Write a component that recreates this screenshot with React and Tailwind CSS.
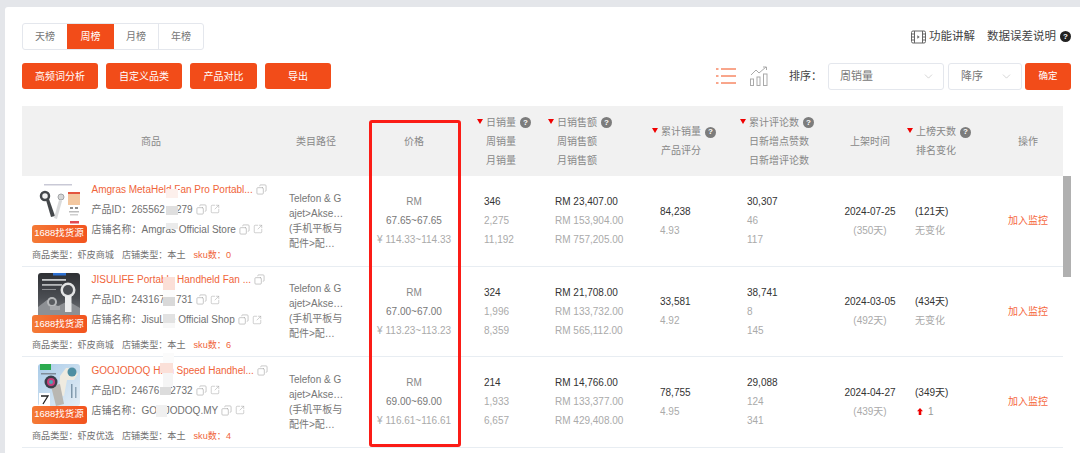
import React from "react";
import { ChevronDown, Copy, SquareArrowOutUpRight } from "lucide-react";

const F = "font-['Liberation_Sans','Noto_Sans_CJK_SC',sans-serif]";

function Tri() {
  return <span className="absolute left-[-9px] top-[6px] w-0 h-0 border-l-[3.5px] border-r-[3.5px] border-t-[5px] border-l-transparent border-r-transparent border-t-[#f00000]" />;
}
function Q({ className = "" }) {
  return <span className={`inline-flex items-center justify-center w-[11px] h-[11px] rounded-full bg-[#7c7c7c] text-white text-[8px] font-bold leading-none ${className}`}>?</span>;
}
function H({ lines }) {
  return (
    <div className="flex flex-col text-[10px] leading-[19px] text-[#888]">
      {lines.map((l, i) => (
        <div key={i} className="relative whitespace-nowrap">
          {i === 0 && <Tri />}
          {l}
          {i === 0 && <Q className="ml-[4px] align-[1px]" />}
        </div>
      ))}
    </div>
  );
}
function Ic({ ext }) {
  return (
    <span className="inline-flex items-center gap-[3px] ml-[3px] text-[#aaa] align-[-2px]">
      <Copy size={11} strokeWidth={1.4} className="-scale-x-100" />
      {ext && <SquareArrowOutUpRight size={10} strokeWidth={1.3} />}
    </span>
  );
}

function Img1() {
  return (
    <svg viewBox="0 0 42 42" className="w-[42px] h-[42px] blur-[0.5px]">
      <rect width="42" height="42" fill="#fff" />
      <rect x="6" y="1" width="28" height="1.5" fill="#c9c9d6" />
      <circle cx="7" cy="13" r="4" fill="#f2f2f2" stroke="#44474b" strokeWidth="2.5" />
      <path d="M8 17 L13 34 L17 33 L11 16Z" fill="#44474a" />
      <circle cx="23" cy="14" r="3" fill="#d4d5d6" stroke="#a2a4a6" strokeWidth="1" />
      <path d="M21 17 L16 35 L19 36 L24 18Z" fill="#d9dadb" />
      <rect x="30" y="9" width="12" height="13" fill="#f3c79f" />
      <rect x="30" y="9" width="12" height="2" fill="#e3553f" />
      <rect x="32" y="24" width="3" height="2" fill="#8b8b8b" />
      <rect x="37" y="24" width="3" height="2" fill="#8b8b8b" />
      <rect x="31" y="28" width="10" height="1.5" fill="#bdbdbd" />
      <rect x="32" y="31" width="8" height="1.5" fill="#cfcfcf" />
      <rect x="32" y="38" width="9" height="2.5" fill="#e24a52" />
    </svg>
  );
}
function Img2() {
  return (
    <svg viewBox="0 0 42 42" className="w-[42px] h-[42px] blur-[0.4px]">
      <defs>
        <linearGradient id="dg" x1="0" y1="0" x2="0" y2="1">
          <stop offset="0" stopColor="#2e3034" />
          <stop offset="0.6" stopColor="#4b4e53" />
          <stop offset="1" stopColor="#74777b" />
        </linearGradient>
      </defs>
      <rect width="42" height="42" rx="3" fill="url(#dg)" />
      <rect x="15" y="0" width="13" height="2.5" fill="#2c6fd0" />
      <rect x="4" y="6" width="24" height="1.8" fill="#c9cbcd" />
      <rect x="4" y="11" width="20" height="1.8" fill="#b5b7b9" />
      <rect x="4" y="16" width="14" height="1" fill="#8f9194" />
      <path d="M0 34 L9 27 L20 33 L30 28 L42 35 V42 H0Z" fill="#8d9094" />
      <circle cx="30" cy="17" r="7.5" fill="#e2e3e4" />
      <circle cx="30" cy="17" r="5" fill="#4a4d52" />
      <rect x="27" y="23" width="6.5" height="16" fill="#ecedee" />
      <circle cx="14" cy="29" r="5" fill="#b7b9bb" />
      <circle cx="14" cy="29" r="3" fill="#5a5d61" />
      <rect x="12" y="33" width="10" height="4" fill="#a6a8ab" />
    </svg>
  );
}
function Img3() {
  return (
    <svg viewBox="0 0 42 42" className="w-[42px] h-[42px] blur-[0.4px]">
      <defs>
        <linearGradient id="bg3" x1="0" y1="0" x2="1" y2="1">
          <stop offset="0" stopColor="#a9cbe8" />
          <stop offset="1" stopColor="#e6eff6" />
        </linearGradient>
      </defs>
      <rect width="42" height="42" rx="3" fill="url(#bg3)" />
      <rect x="2" y="0" width="11" height="6" fill="#2bab4e" />
      <rect x="3" y="9" width="15" height="1.5" fill="#7f8b98" />
      <path d="M22 12 L28 4 L36 4 L40 10 L36 16 L29 16 L26 32 L21 31Z" fill="#efebe0" />
      <circle cx="34" cy="8" r="4.5" fill="#4f8fa3" />
      <path d="M13 22 L22 20 L26 40 L18 42Z" fill="#b9b7b2" />
      <circle cx="13" cy="18" r="6.5" fill="#3b3f4a" />
      <circle cx="13" cy="18" r="4" fill="#c93f7c" />
      <circle cx="13" cy="18" r="2" fill="#4aa6b3" />
      <rect x="1" y="29" width="11" height="13" fill="#fff" />
      <path d="M3 32 H10 L5 40" fill="none" stroke="#222" strokeWidth="1.3" />
      <rect x="33" y="20" width="1.5" height="14" fill="#7e97aa" />
      <rect x="37" y="23" width="1.5" height="11" fill="#8ea6b8" />
    </svg>
  );
}

const rows = [
  {
    img: <Img1 />, title: "Amgras MetaHeld Fan Pro Portabl...", id: "265562", id2: "279", store: "Amgras Official Store",
    type: "虾皮商城", sku: 0, price: "67.65~67.65", cny: "114.33~114.33",
    d: ["346", "2,275", "11,192"], a: ["RM 23,407.00", "RM 153,904.00", "RM 757,205.00"],
    t: ["84,238", "4.93"], r: ["30,307", "46", "117"], date: "2024-07-25", dd: "(350天)", days: "(121天)", ch: "无变化",
    patches: [
      { x: "left-[144px] top-[13px] w-[12px] h-[9px] bg-[#fdf0ec]", k: 1 },
      { x: "left-[144px] top-[30px] w-[12px] h-[9px] bg-[#dfdfdf]", k: 2 },
      { x: "left-[144px] top-[47px] w-[12px] h-[6px] bg-[#ebebeb]", k: 3 },
    ],
  },
  {
    img: <Img2 />, title: "JISULIFE Portable Handheld Fan ...", id: "243167", id2: "731", store: "JisuLife Official Shop",
    type: "虾皮商城", sku: 6, price: "67.00~67.00", cny: "113.23~113.23",
    d: ["324", "1,996", "8,359"], a: ["RM 21,708.00", "RM 133,732.00", "RM 565,112.00"],
    t: ["33,581", "4.92"], r: ["38,741", "8", "145"], date: "2024-03-05", dd: "(492天)", days: "(434天)", ch: "无变化",
    patches: [
      { x: "left-[141px] top-[10px] w-[12px] h-[13px] bg-[#fbdfd7]", k: 1 },
      { x: "left-[141px] top-[23px] w-[12px] h-[7px] bg-[#fcfcfc]", k: 2 },
      { x: "left-[141px] top-[30px] w-[12px] h-[9px] bg-[#d9d9d9]", k: 3 },
      { x: "left-[141px] top-[47px] w-[12px] h-[9px] bg-[#e2e2e2]", k: 4 },
      { x: "left-[141px] top-[56px] w-[12px] h-[5px] bg-[#f8f8f8]", k: 5 },
    ],
  },
  {
    img: <Img3 />, title: "GOOJODOQ High Speed Handhel...", id: "24676", id2: "2732", store: "GOOJODOQ.MY",
    type: "虾皮优选", sku: 4, price: "69.00~69.00", cny: "116.61~116.61",
    d: ["214", "1,933", "6,657"], a: ["RM 14,766.00", "RM 133,377.00", "RM 429,408.00"],
    t: ["78,755", "4.95"], r: ["29,088", "124", "341"], date: "2024-04-27", dd: "(439天)", days: "(349天)", ch: "up",
    patches: [
      { x: "left-[141px] top-[-4px] w-[11px] h-[10px] bg-[#fbfbfb]", k: 0 },
      { x: "left-[138px] top-[6px] w-[13px] h-[10px] bg-[#fbe0d8]", k: 1 },
      { x: "left-[141px] top-[16px] w-[10px] h-[14px] bg-[#f5f5f5]", k: 2 },
      { x: "left-[138px] top-[30px] w-[11px] h-[8px] bg-[#dcdcdc]", k: 3 },
      { x: "left-[134px] top-[48px] w-[11px] h-[12px] bg-[#f0f0f0]", k: 4 },
    ],
  },
];

function Stack({ items }) {
  return (
    <div className="flex flex-col leading-[19px] text-[10px] text-[#aaa] whitespace-nowrap">
      {items.map((x, i) => (
        <div key={i} className={i === 0 ? "text-[#333]" : ""}>{x}</div>
      ))}
    </div>
  );
}

const cols = "grid grid-cols-[258px_88px_116px_71px_105px_87px_78px_90px_78px_70px]";
const btn = "h-[26px] flex items-center justify-center rounded-[3px] bg-[#f24c19]";

export default function App() {
  return (
    <div className={`${F} w-[1080px] h-[453px] overflow-hidden bg-[#e4e6ea] pl-[5px] pt-[7px]`}>
      <div className="relative bg-white h-[446px] rounded-tl-[3px] pl-[17px] pr-[9px] pt-[16px]">
        <div className="flex justify-between items-start h-[27px]">
          <div className="flex h-[27px] border border-[#e4e7ed] rounded-[3px] text-[10px] text-[#777]">
            <div className="w-[44px] flex items-center justify-center">天榜</div>
            <div className="w-[47px] flex items-center justify-center bg-[#f24c19] text-white">周榜</div>
            <div className="w-[45px] flex items-center justify-center border-r border-[#e4e7ed]">月榜</div>
            <div className="w-[44px] flex items-center justify-center">年榜</div>
          </div>
          <div className="flex items-center text-[11.5px] text-[#444] mt-[1px] h-[25px]">
            <svg viewBox="0 0 15 14" className="w-[15px] h-[14px] mr-[3px]" fill="none" stroke="#666" strokeWidth="1">
              <rect x="0.5" y="1" width="14" height="12" rx="1.5" />
              <path d="M3.5 1v12M11.5 1v12M0.5 4h3M0.5 7h3M0.5 10h3M11.5 4h3M11.5 7h3M11.5 10h3" />
              <path d="M6.3 5.2l2.4 1.8-2.4 1.8z" fill="#666" stroke="none" />
            </svg>
            <span>功能讲解</span>
            <span className="ml-[12px]">数据误差说明</span>
            <span className="ml-[4px] inline-flex items-center justify-center w-[11px] h-[11px] rounded-full bg-[#222] text-white text-[8px] font-bold leading-none">?</span>
          </div>
        </div>

        <div className="flex justify-between items-center mt-[12px] h-[28px]">
          <div className="flex gap-[8px] text-[10px] text-white">
            <div className={`${btn} w-[76px]`}>高频词分析</div>
            <div className={`${btn} w-[76px]`}>自定义品类</div>
            <div className={`${btn} w-[67px]`}>产品对比</div>
            <div className={`${btn} w-[66px]`}>导出</div>
          </div>
          <div className="flex items-center">
            <svg viewBox="0 0 20 16" className="w-[20px] h-[16px]" fill="none" stroke="#f24c19" strokeWidth="1">
              <path d="M5 1h15M5 8h15M5 15h15" />
              <path d="M0 1h2.5M0 8h2.5M0 15h2.5" />
            </svg>
            <svg viewBox="0 0 18 20" className="w-[18px] h-[20px] ml-[14px]" fill="none" stroke="#aaa" strokeWidth="1">
              <rect x="0.5" y="13" width="3" height="6.5" />
              <rect x="7" y="11" width="3" height="8.5" />
              <rect x="13.5" y="8" width="3.5" height="11.5" />
              <path d="M1 9l5-5 3 3 7-6M13 1h3.5v3" />
            </svg>
            <span className="ml-[21px] text-[11px] text-[#444] w-[39px]">排序：</span>
            <div className="w-[116px] h-[27px] border border-[#e4e7ed] rounded-[3px] flex items-center justify-between pl-[11px] pr-[8px] text-[11px] text-[#777]">
              周销量 <ChevronDown size={13} strokeWidth={0.9} color="#aaa" />
            </div>
            <div className="ml-[4px] w-[74px] h-[27px] border border-[#e4e7ed] rounded-[3px] flex items-center justify-between pl-[12px] pr-[8px] text-[11px] text-[#777]">
              降序 <ChevronDown size={13} strokeWidth={0.9} color="#aaa" />
            </div>
            <div className="ml-[3px] w-[46px] h-[27px] rounded-[3px] bg-[#f24c19] text-white text-[9.5px] flex items-center justify-center">确定</div>
          </div>
        </div>

        <div className="w-[1041px] mt-[16px]">
          <div className={`${cols} h-[70px] bg-[#f1f1f1] items-center text-[10px] text-[#888]`}>
            <div className="text-center">商品</div>
            <div className="pl-[16px]">类目路径</div>
            <div className="text-center pr-[24px]">价格</div>
            <div className="pl-[2px]"><H lines={["日销量", "周销量", "月销量"]} /></div>
            <div className="pl-[2px]"><H lines={["日销售额", "周销售额", "月销售额"]} /></div>
            <div className="pl-[1px]"><H lines={["累计销量", "产品评分"]} /></div>
            <div className="pl-[2px]"><H lines={["累计评论数", "日新增点赞数", "日新增评论数"]} /></div>
            <div className="text-center">上架时间</div>
            <div className="pl-[1px]"><H lines={["上榜天数", "排名变化"]} /></div>
            <div className="text-center">操作</div>
          </div>

          {rows.map((r) => (
            <div key={r.id} className={`${cols} h-[90.5px] border-b border-[#e8edf2] items-center text-[10px]`}>
              <div className="relative h-full pl-[9.5px]">
                <div className="flex">
                  <div className="w-[60px] pl-[6.5px] pt-[6.5px] shrink-0">
                    <div className="h-[42px]">{r.img}</div>
                    <div className="-ml-[6.5px] w-[55px] h-[18px] rounded-[3px] bg-gradient-to-r from-[#f47a35] via-[#f4622a] to-[#f2541e] text-white text-[9.5px] flex items-center justify-center whitespace-nowrap">1688找货源</div>
                  </div>
                  <div className="flex flex-col pt-[3.5px] text-[10px] leading-[20px] text-[#707070] whitespace-nowrap">
                    <div className="text-[#f0643a]">{r.title}<Ic /></div>
                    <div>产品ID：{r.id}<span className="inline-block w-[11px]" />{r.id2}<Ic ext /></div>
                    <div>店铺名称：{r.store}<Ic ext /></div>
                  </div>
                </div>
                <div className="absolute left-[10px] bottom-[4px] flex text-[9.1px] leading-[14px] text-[#707070] whitespace-nowrap">
                  <span>商品类型：{r.type}</span>
                  <span className="ml-[8px]">店铺类型：本土</span>
                  <span className="ml-[8px] text-[#f0643a]">sku数：{r.sku}</span>
                </div>
                {r.patches.map((p) => (
                  <span key={p.k} className={`absolute ${p.x}`} />
                ))}
              </div>
              <div className="pl-[9px] text-[10px] leading-[15px] text-[#777]">
                <div>Telefon &amp; G</div>
                <div>ajet&gt;Akse…</div>
                <div>(手机平板与</div>
                <div>配件&gt;配…</div>
              </div>
              <div className="text-center pr-[24px] text-[10px] leading-[19px] text-[#777] whitespace-nowrap">
                <div className="text-[#888]">RM</div>
                <div>{r.price}</div>
                <div className="text-[#aaa]"><span className="mr-[3px]">¥</span>{r.cny}</div>
              </div>
              <Stack items={r.d} />
              <Stack items={r.a} />
              <Stack items={r.t} />
              <Stack items={r.r} />
              <div className="text-center text-[10px] leading-[19px] text-[#333]">
                <div>{r.date}</div>
                <div className="text-[#aaa]">{r.dd}</div>
              </div>
              <div className="text-[10px] leading-[19px] text-[#333]">
                <div>{r.days}</div>
                {r.ch === "up" ? (
                  <div className="text-[#999] flex items-center pl-[2px] gap-[5px]">
                    <svg viewBox="0 0 6 7" className="w-[6px] h-[7px]"><path d="M3 0L6 3.2H4.3V7H1.7V3.2H0Z" fill="#ee0000" /></svg>
                    1
                  </div>
                ) : (
                  <div className="text-[#aaa]">{r.ch}</div>
                )}
              </div>
              <div className="text-center text-[10px] text-[#f5673e]">加入监控</div>
            </div>
          ))}
        </div>

        <div className="absolute left-[1058px] top-[169px] w-[8px] h-[101px] bg-[#b0b0b0]" />
        <div className="absolute left-[364px] top-[113px] w-[92px] h-[327px] border-[3px] border-[#fb1c16] rounded-[3px]" />
      </div>
    </div>
  );
}
